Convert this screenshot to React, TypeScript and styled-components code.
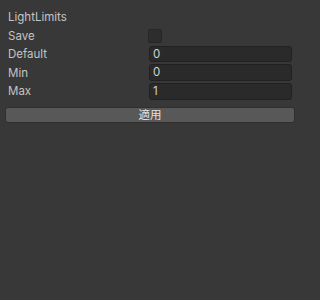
import styled, { createGlobalStyle } from "styled-components";

const GlobalStyle = createGlobalStyle`
  html, body {
    margin: 0;
    padding: 0;
    background: #383838;
  }
  body {
    font-family: Inter, "Noto Sans CJK JP", "Noto Sans", sans-serif;
  }
`;

const fields = [
  { label: "Default", value: "0" },
  { label: "Min", value: "0" },
  { label: "Max", value: "1" },
];

const App = () => {
  return (
    <>
      <GlobalStyle />
      <Inspector>
        <Rows>
          <Row>
            <Label>LightLimits</Label>
          </Row>
          <Row>
            <Label>Save</Label>
            <Checkbox />
          </Row>
          {fields.map((f) => (
            <Row key={f.label}>
              <Label>{f.label}</Label>
              <Field>{f.value}</Field>
            </Row>
          ))}
        </Rows>
        <ApplyButton type="button">適用</ApplyButton>
      </Inspector>
    </>
  );
};

const Inspector = styled.div`
  width: 300px;
  min-height: 300px;
  box-sizing: border-box;
  padding: 7.7px 5px 0 5px;
  background: #383838;
  color: #c4c4c4;
  font-size: 11.5px;
`;

const Rows = styled.div`
  display: flex;
  flex-direction: column;
`;

const Row = styled.div`
  display: grid;
  grid-template-columns: 140px 1fr;
  align-items: center;
  height: 18.6px;
  padding: 0 3px;
`;

const Label = styled.span`
  line-height: 18px;
  white-space: nowrap;
`;

const Checkbox = styled.div`
  width: 14px;
  height: 14px;
  box-sizing: border-box;
  border: 1px solid #272727;
  border-radius: 2px;
  background: #2d2d2d;
`;

const Field = styled.div`
  height: 16.6px;
  box-sizing: border-box;
  padding: 0 3px;
  line-height: 14.6px;
  margin-left: 1px;
  background: #2a2a2a;
  border: 1px solid #212121;
  border-radius: 3px;
  color: #d2d2d2;
`;

const ApplyButton = styled.button`
  display: block;
  width: 100%;
  height: 16px;
  margin-top: 6px;
  padding: 0;
  box-sizing: border-box;
  background: #585858;
  border: 1px solid #303030;
  border-radius: 3px;
  color: #e0e0e0;
  font-family: Inter, "Noto Sans CJK JP", sans-serif;
  font-size: 11.5px;
  line-height: 14px;
  text-align: center;
`;

export default App;
